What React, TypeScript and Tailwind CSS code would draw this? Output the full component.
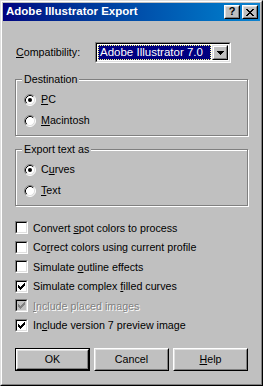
import React from 'react'

const CHECK =
  'M6 0h1v1h-1z M5 1h2v1h-2z M0 2h1v1h-1z M4 2h3v1h-3z M0 3h2v1h-2z M3 3h3v1h-3z M0 4h5v1h-5z M1 5h3v1h-3z M2 6h1v1h-1z'

const CLOSE =
  'M0 0h2v1h-2z M6 0h2v1h-2z M1 1h2v1h-2z M5 1h2v1h-2z M2 2h4v1h-4z M3 3h2v1h-2z M2 4h4v1h-4z M1 5h2v1h-2z M5 5h2v1h-2z M0 6h2v1h-2z M6 6h2v1h-2z'

const Radio = ({ checked }: { checked?: boolean }) => (
  <svg width="12" height="12" viewBox="0 0 12 12" className="shrink-0">
    <circle cx="6" cy="6" r="5" fill="white" />
    <path d="M2.11 9.89 A5.5 5.5 0 0 1 9.89 2.11" fill="none" stroke="#808080" />
    <path d="M2.82 9.18 A4.5 4.5 0 0 1 9.18 2.82" fill="none" stroke="#000" />
    <path d="M9.89 2.11 A5.5 5.5 0 0 1 2.11 9.89" fill="none" stroke="#fff" />
    <path d="M9.18 2.82 A4.5 4.5 0 0 1 2.82 9.18" fill="none" stroke="#dfdfdf" />
    {checked && <circle cx="6" cy="6" r="2" fill="#000" />}
  </svg>
)

const Check = ({ checked, disabled }: { checked?: boolean; disabled?: boolean }) => (
  <div className="w-[13px] h-[13px] shrink-0 border border-t-[#808080] border-l-[#808080] border-b-white border-r-white">
    <div
      className={`w-full h-full border border-t-black border-l-black border-b-[#dfdfdf] border-r-[#dfdfdf] flex items-center justify-center ${
        disabled ? 'bg-[#c0c0c0]' : 'bg-white'
      }`}
    >
      {checked && (
        <svg width="7" height="7" viewBox="0 0 7 7">
          <path d={CHECK} fill={disabled ? '#808080' : '#000'} />
        </svg>
      )}
    </div>
  </div>
)

const Group = ({ label, children }: { label: string; children: React.ReactNode }) => (
  <div className="relative h-[57px] border border-[#808080] shadow-[inset_1px_1px_0_#fff,1px_1px_0_#fff] pt-[9px] pl-[8px]">
    <span className="absolute -top-[8px] left-[6px] bg-[#c0c0c0] px-[2px] leading-[14px]">{label}</span>
    {children}
  </div>
)

const RadioRow = ({ checked, children }: { checked?: boolean; children: React.ReactNode }) => (
  <div className="h-[21px] flex items-center gap-[5px]">
    <Radio checked={checked} />
    <span>{children}</span>
  </div>
)

const CheckRow = ({
  checked,
  disabled,
  children,
}: {
  checked?: boolean
  disabled?: boolean
  children: React.ReactNode
}) => (
  <div className="h-[19.5px] flex items-center gap-[5px]">
    <Check checked={checked} disabled={disabled} />
    <span className={disabled ? 'text-[#808080] [text-shadow:1px_1px_0_#fff]' : ''}>{children}</span>
  </div>
)

const Button = ({ children, isDefault }: { children: React.ReactNode; isDefault?: boolean }) => {
  const inner = (
    <div className="w-full h-full border border-t-white border-l-white border-b-black border-r-black">
      <div className="w-full h-full border border-t-[#dfdfdf] border-l-[#dfdfdf] border-b-[#808080] border-r-[#808080] flex items-center justify-center">
        {children}
      </div>
    </div>
  )
  return (
    <div className={`w-[75px] h-[23px] ${isDefault ? 'border border-black' : ''}`}>{inner}</div>
  )
}

const TitleButton = ({ children }: { children: React.ReactNode }) => (
  <div className="w-[16px] h-[14px] bg-[#c0c0c0] border border-t-white border-l-white border-b-black border-r-black">
    <div className="w-full h-full border border-t-[#dfdfdf] border-l-[#dfdfdf] border-b-[#808080] border-r-[#808080] flex items-center justify-center">
      {children}
    </div>
  </div>
)

export default function App() {
  return (
    <div
      className="w-[263px] h-[386px] bg-[#c0c0c0] border border-t-[#dfdfdf] border-l-[#dfdfdf] border-b-black border-r-black text-[10.7px] text-black"
      style={{ fontFamily: '"Liberation Sans", Arial, sans-serif' }}
    >
      <div className="w-full h-full border border-t-white border-l-white border-b-[#808080] border-r-[#808080] p-[1px] flex flex-col">
        {/* title bar */}
        <div className="h-[18px] bg-linear-to-r from-[#000080] to-[#1084d0] flex items-center pl-[3px] pr-[2px]">
          <span className="text-white font-bold text-[11.5px] flex-1">Adobe Illustrator Export</span>
          <div className="flex gap-[2px]">
            <TitleButton>
              <span className="font-bold text-[11px] leading-none -mt-[1px]">?</span>
            </TitleButton>
            <TitleButton>
              <svg width="8" height="7" viewBox="0 0 8 7">
                <path d={CLOSE} fill="#000" />
              </svg>
            </TitleButton>
          </div>
        </div>

        <div className="px-[12px] flex flex-col">
          {/* compatibility */}
          <div className="mt-[21px] h-[21px] flex items-center">
            <span className="w-[80px] pl-[1px]">
              <u>C</u>ompatibility:
            </span>
            <div className="w-[136px] h-[21px] border border-t-[#808080] border-l-[#808080] border-b-white border-r-white">
              <div className="w-full h-full border border-t-black border-l-black border-b-[#dfdfdf] border-r-[#dfdfdf] bg-white flex items-center p-[1px]">
                <div className="flex-1 h-full bg-[#000080] outline outline-1 outline-dotted outline-[#ffff80] -outline-offset-1 text-white flex items-center pl-[2px] text-[11.5px]">
                  Adobe Illustrator 7.0
                </div>
                <div className="w-[16px] h-full ml-[1px] border border-t-[#dfdfdf] border-l-[#dfdfdf] border-b-black border-r-black bg-[#c0c0c0]">
                  <div className="w-full h-full border border-t-white border-l-white border-b-[#808080] border-r-[#808080] flex items-center justify-center">
                    <svg width="7" height="4" viewBox="0 0 7 4">
                      <path d="M0 0h7v1h-7z M1 1h5v1h-5z M2 2h3v1h-3z M3 3h1v1h-1z" fill="#000" />
                    </svg>
                  </div>
                </div>
              </div>
            </div>
          </div>

          <div className="mt-[16px]">
            <Group label="Destination">
              <RadioRow checked>
                <u>P</u>C
              </RadioRow>
              <RadioRow>
                <u>M</u>acintosh
              </RadioRow>
            </Group>
          </div>

          <div className="mt-[13px]">
            <Group label="Export text as">
              <RadioRow checked>
                C<u>u</u>rves
              </RadioRow>
              <RadioRow>
                <u>T</u>ext
              </RadioRow>
            </Group>
          </div>

          <div className="mt-[12px] flex flex-col">
            <CheckRow>
              Convert <u>s</u>pot colors to process
            </CheckRow>
            <CheckRow>
              Co<u>r</u>rect colors using current profile
            </CheckRow>
            <CheckRow>
              Simulate <u>o</u>utline effects
            </CheckRow>
            <CheckRow checked>
              Simulate complex <u>f</u>illed curves
            </CheckRow>
            <CheckRow checked disabled>
              <u>I</u>nclude placed images
            </CheckRow>
            <CheckRow checked>
              In<u>c</u>lude version 7 preview image
            </CheckRow>
          </div>

          <div className="mt-[13px] flex justify-between">
            <Button isDefault>OK</Button>
            <Button>Cancel</Button>
            <Button>
              <span>
                <u>H</u>elp
              </span>
            </Button>
          </div>
        </div>
      </div>
    </div>
  )
}
